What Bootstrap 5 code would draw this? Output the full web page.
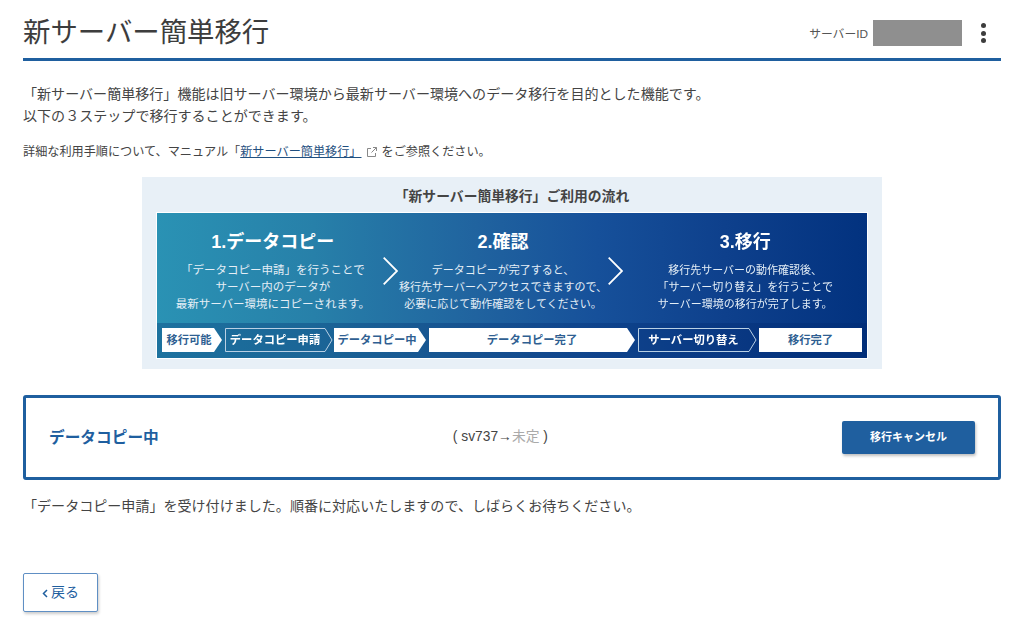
<!DOCTYPE html>
<html lang="ja">
<head>
<meta charset="utf-8">
<title>新サーバー簡単移行</title>
<link href="https://cdn.jsdelivr.net/npm/bootstrap@5.3.0/dist/css/bootstrap.min.css" rel="stylesheet">
<style>
html,body{height:641px;overflow:hidden;background:#fff}
body{font-family:"Liberation Sans","Noto Sans CJK JP",sans-serif;color:#444;font-size:14px}
.pg{padding:0 23px}
.pg-head{height:61px;border-bottom:3px solid #1f5f9f}
.pg-title{font-size:27.4px;font-weight:400;color:#3d3d3d;line-height:1;margin:0;padding-top:19px}
.sid-wrap{padding-top:20px}
.sid-label{font-size:11.8px;color:#555;margin-right:5px;padding-top:3px}
.sid-mask{width:89px;height:26px;background:#8f8f8f}
.kebab{width:6px;margin:0 14px 0 19px;gap:2.4px}
.kebab i{display:block;width:5px;height:5px;border-radius:50%;background:#3d3d3d}
.intro{margin:22px 0 0;line-height:22px;font-size:14.05px}
.note{margin:16px 0 0;font-size:12.15px;line-height:18px}
.note a{color:#1f4f80}
.ext{vertical-align:-2px;margin:0 4px 0 4px}
.flow{width:740px;height:192px;margin:16px auto 0;background:#e8f0f7;padding-top:10px}
.flow-title{font-size:13.8px;font-weight:700;text-align:center;color:#444;line-height:20px;margin-bottom:6px}
.flow-panel{width:710px;height:145px;margin:0 auto;outline:1px solid #fff;background:linear-gradient(90deg,#2a92b4 0,#2780a9 22%,#20639f 45%,#16509a 62%,#0e408c 80%,#02327f 100%);color:#fff;filter:blur(.3px)}
.flow-main{height:110px}
.flow-col{text-align:center;padding-top:15px}
.fc1{width:226px;padding-left:6px}
.fc2{width:211px}
.fc3{width:244px}
.flow-h{font-size:18px;font-weight:700;line-height:28px;margin-bottom:6px}
.flow-d{font-size:11px;line-height:17px;white-space:nowrap;color:#e4eef6}
.fc1 .flow-d{font-size:11.5px}
.flow-arrow{flex:0 0 15px;margin-top:44px}
.flow-strip{height:35px;background:rgba(0,40,110,.3);padding:5px 5px 0}
.chip{height:24px;font-size:11.3px;font-weight:700;line-height:24px;text-align:center;position:relative}
.chip-on{background:#fff;color:#2f5f92}
.chip-ar{clip-path:polygon(0 0,calc(100% - 8px) 0,100% 50%,calc(100% - 8px) 100%,0 100%)}
.chip-out{color:#fff}
.chip-out svg{position:absolute;inset:0;width:100%;height:100%}
.c1{width:60px;margin-right:3px;padding-right:6px}
.c2{width:108px;margin-right:1px;padding-right:8px}
.c3{width:92px;margin-right:3px;padding-right:6px}
.c4{width:206px;margin-right:3px}
.c5{width:119px;margin-right:2px;padding-right:8px}
.c6{width:103px}
.status{height:85px;margin-top:26px;border:3px solid #1f5f9f;border-radius:3px;padding:0 23px}
.status-name{font-size:15.7px;font-weight:700;color:#1f5f9f}
.status-srv{font-size:13.8px;color:#444}
.status-srv span{color:#aaa}
.btn-cancel{width:133px;height:33px;background:#1f5f9f;color:#fff;font-size:11px;font-weight:700;border:0;border-radius:2px;box-shadow:1px 2px 3px rgba(0,0,0,.25);padding:0}
.btn-cancel:hover{background:#1f5f9f;color:#fff}
.msg{margin:16px 0 0;line-height:20px;font-size:14.05px}
.btn-back{width:75px;height:39px;margin-top:57px;border:1.5px solid #5f8fc4;border-radius:2px;background:#fff;color:#1f5f9f;font-size:14px;box-shadow:1px 2px 3px rgba(0,0,0,.2);padding:0}
.back-ic{margin-right:3px;vertical-align:-1px}
</style>
</head>
<body>
<div class="pg">
  <header class="pg-head d-flex align-items-start justify-content-between">
    <h1 class="pg-title">新サーバー簡単移行</h1>
    <div class="d-flex align-items-center sid-wrap">
      <span class="sid-label">サーバーID</span>
      <span class="sid-mask"></span>
      <span class="kebab d-flex flex-column"><i></i><i></i><i></i></span>
    </div>
  </header>
  <p class="intro">「新サーバー簡単移行」機能は旧サーバー環境から最新サーバー環境へのデータ移行を目的とした機能です。<br>以下の３ステップで移行することができます。</p>
  <p class="note">詳細な利用手順について、マニュアル「<a href="#">新サーバー簡単移行」</a><svg class="ext" width="12" height="12" viewBox="0 0 12 12" fill="none" stroke="#888" stroke-width="1"><path d="M5 2.5H1.5v8h8V7"/><path d="M7 1.5h3.5V5M10.5 1.5 5.5 6.5"/></svg>をご参照ください。</p>
  <section class="flow">
    <div class="flow-title">「新サーバー簡単移行」ご利用の流れ</div>
    <div class="flow-panel">
      <div class="flow-main d-flex">
        <div class="flow-col fc1"><div class="flow-h">1.データコピー</div><div class="flow-d">「データコピー申請」を行うことで<br>サーバー内のデータが<br>最新サーバー環境にコピーされます。</div></div>
        <svg class="flow-arrow" width="15" height="28" viewBox="0 0 15 28" fill="none" stroke="#fff" stroke-width="1.8"><path d="M.7.7 14 14 .7 27.3"/></svg>
        <div class="flow-col fc2"><div class="flow-h">2.確認</div><div class="flow-d">データコピーが完了すると、<br>移行先サーバーへアクセスできますので、<br>必要に応じて動作確認をしてください。</div></div>
        <svg class="flow-arrow" width="15" height="28" viewBox="0 0 15 28" fill="none" stroke="#fff" stroke-width="1.8"><path d="M.7.7 14 14 .7 27.3"/></svg>
        <div class="flow-col fc3"><div class="flow-h">3.移行</div><div class="flow-d">移行先サーバーの動作確認後、<br>「サーバー切り替え」を行うことで<br>サーバー環境の移行が完了します。</div></div>
      </div>
      <div class="flow-strip d-flex">
        <div class="chip chip-on chip-ar c1">移行可能</div>
        <div class="chip chip-out c2"><svg viewBox="0 0 108 24" preserveAspectRatio="none" fill="none" stroke="#b9d0e4"><path d="M.5.5H100L107 12 100 23.5H.5Z"/></svg><span class="position-relative">データコピー申請</span></div>
        <div class="chip chip-on chip-ar c3">データコピー中</div>
        <div class="chip chip-on chip-ar c4">データコピー完了</div>
        <div class="chip chip-out c5"><svg viewBox="0 0 119 24" preserveAspectRatio="none" fill="none" stroke="#b9d0e4"><path d="M.5.5H111L118 12 111 23.5H.5Z"/></svg><span class="position-relative">サーバー切り替え</span></div>
        <div class="chip chip-on c6">移行完了</div>
      </div>
    </div>
  </section>
  <section class="status d-flex align-items-center justify-content-between">
    <span class="status-name">データコピー中</span>
    <span class="status-srv">( sv737→<span>未定</span> )</span>
    <button type="button" class="btn btn-cancel">移行キャンセル</button>
  </section>
  <p class="msg">「データコピー申請」を受け付けました。順番に対応いたしますので、しばらくお待ちください。</p>
  <button type="button" class="btn btn-back"><svg class="back-ic" width="6" height="9" viewBox="0 0 6 9" fill="none" stroke="#1f5f9f" stroke-width="1.5"><path d="M5 1 1.5 4.5 5 8"/></svg>戻る</button>
</div>
<script src="https://cdn.jsdelivr.net/npm/bootstrap@5.3.0/dist/js/bootstrap.bundle.min.js"></script>
</body>
</html>
